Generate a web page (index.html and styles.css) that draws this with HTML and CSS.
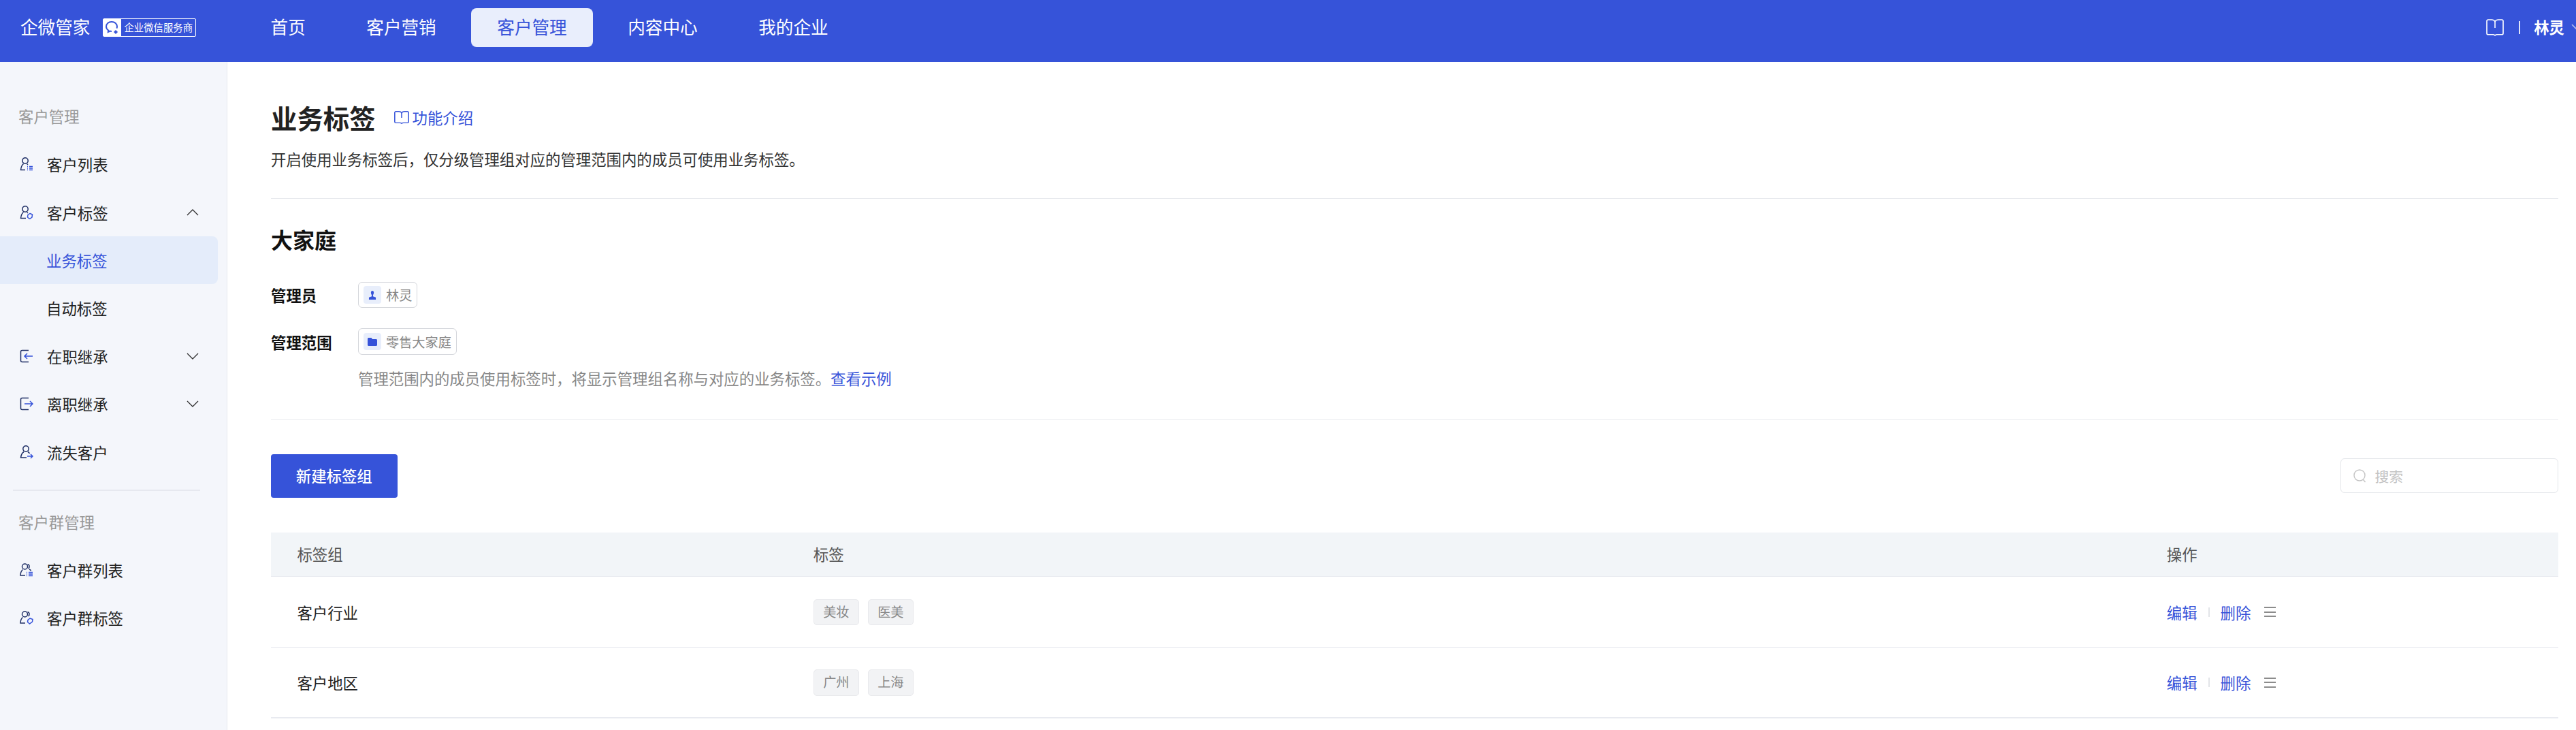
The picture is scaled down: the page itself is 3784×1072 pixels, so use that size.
FILE: index.html
```html
<!DOCTYPE html>
<html lang="zh-CN">
<head>
  <meta charset="UTF-8">
  <title>业务标签</title>
  <link rel="stylesheet" href="styles.css">
</head>
<body>
  <header class="topbar">
    <div class="brand">企微管家</div>
    <div class="badge">
      <span class="badge-logo">
        <svg width="22" height="22" viewBox="0 0 22 22" fill="none" stroke="#3653d9" stroke-width="2"><path d="M10 2c-4.700 0-8 3-8 7 0 2.400 1.300 4.300 3.200 5.500L4.800 17l3-1.400c.8.200 1.500.3 2.200.3"/><path d="M10 2c4.600 0 8 3 8 7 0 1-.2 1.800-.6 2.600"/><path d="M16 14.500l2.500 2.500-2.500 2.500-2.500-2.500z" fill="#3653d9" stroke-width="1"/></svg>
      </span>
      <span class="badge-text">企业微信服务商</span>
    </div>
    <nav class="nav">
      <a class="nav-item">首页</a>
      <a class="nav-item">客户营销</a>
      <a class="nav-item active">客户管理</a>
      <a class="nav-item">内容中心</a>
      <a class="nav-item">我的企业</a>
    </nav>
    <div class="user">
      <svg width="26" height="25" viewBox="0 0 26 25" fill="none" stroke="#fff" stroke-width="1.600"><path d="M13 3.500C12 1.800 10.500 1 8 1H3C1.800 1 1 1.800 1 3v18c0 1.200.8 1.800 2 1.800h7c1.300 0 2.200.4 3 1.200.8-.8 1.700-1.200 3-1.200h7c1.200 0 2-.6 2-1.800V3c0-1.200-.8-2-2-2h-5c-2.500 0-4 .8-5 2.500z"/><path d="M13 3.500V13"/></svg>
      <span class="user-line"></span>
      <span class="user-name">林灵</span>
      <svg width="16" height="10" viewBox="0 0 16 10" fill="none" stroke="#fff" stroke-opacity=".6" stroke-width="1.600"><path d="M1 1l7 7 7-7"/></svg>
    </div>
  </header>

  <div class="layout">
    <aside class="sidebar">
      <div class="side-label">客户管理</div>
      <a class="side-item">
        <svg class="side-icon" viewBox="0 0 20 20" fill="none" stroke="#1f2f66" stroke-width="1.500"><circle cx="8" cy="5" r="4.200"/><path d="M5.500 9.500C3.500 11 2 14 1.500 18.500H8"/><path d="M10.500 9.500c.6.400 1 .9 1.400 1.500"/><path d="M11 13.500h1M14 13.500h5M11 16h1M14 16h5M11 18.500h1M14 18.500h5" stroke="#3653d9"/></svg>
        <span>客户列表</span>
      </a>
      <a class="side-item">
        <svg class="side-icon" viewBox="0 0 20 20" fill="none" stroke="#1f2f66" stroke-width="1.500"><circle cx="8" cy="5" r="4.200"/><path d="M5.500 9.500C3.500 11 2 14 1.500 18.500H9"/><path d="M10.500 9.500c.6.400 1 .9 1.400 1.500"/><path d="M15 11.500l3.500 1.500-.5 4-3.500 2.500-3-2.500.5-3.500z" stroke="#3653d9"/></svg>
        <span>客户标签</span>
        <svg class="side-arrow" viewBox="0 0 18 10" fill="none" stroke="#333" stroke-width="1.300"><path d="M1 9l8-8 8 8"/></svg>
      </a>
      <a class="side-item sub current"><span>业务标签</span></a>
      <a class="side-item sub"><span>自动标签</span></a>
      <a class="side-item">
        <svg class="side-icon" viewBox="0 0 20 20" fill="none" stroke="#1f2f66" stroke-width="1.500"><path d="M13 1.500H3.500c-1 0-2 1-2 2v13c0 1 1 2 2 2H13"/><path d="M19 10H7M11 6l-4 4 4 4" stroke="#3653d9"/></svg>
        <span>在职继承</span>
        <svg class="side-arrow" viewBox="0 0 18 10" fill="none" stroke="#333" stroke-width="1.300"><path d="M1 1l8 8 8-8"/></svg>
      </a>
      <a class="side-item">
        <svg class="side-icon" viewBox="0 0 20 20" fill="none" stroke="#1f2f66" stroke-width="1.500"><path d="M13 1.500H3.500c-1 0-2 1-2 2v13c0 1 1 2 2 2H13"/><path d="M7 10h12M15 6l4 4-4 4" stroke="#3653d9"/></svg>
        <span>离职继承</span>
        <svg class="side-arrow" viewBox="0 0 18 10" fill="none" stroke="#333" stroke-width="1.300"><path d="M1 1l8 8 8-8"/></svg>
      </a>
      <a class="side-item">
        <svg class="side-icon" viewBox="0 0 20 20" fill="none" stroke="#1f2f66" stroke-width="1.500"><circle cx="9" cy="5" r="4.200"/><path d="M6 9.500C3.500 11 2 14 1.500 18H10"/><path d="M12 9.500c1 .6 2 1.500 2.500 2.500"/><path d="M11 16h8M16 13l3 3-3 3" stroke="#3653d9"/></svg>
        <span>流失客户</span>
      </a>
      <div class="side-line"></div>
      <div class="side-label second">客户群管理</div>
      <a class="side-item">
        <svg class="side-icon" viewBox="0 0 20 20" fill="none" stroke="#1f2f66" stroke-width="1.500"><circle cx="7.500" cy="5" r="4"/><path d="M4.500 9.500C2.500 11 1.200 14 1 18h7"/><path d="M11.500 1.800c3 .3 3.500 4.500 1 6M14 9c1 .3 2 1 2.600 2"/><path d="M10 13.500h1M13 13.500h6M10 16h1M13 16h6M10 18.500h1M13 18.500h6" stroke="#3653d9"/></svg>
        <span>客户群列表</span>
      </a>
      <a class="side-item">
        <svg class="side-icon" viewBox="0 0 20 20" fill="none" stroke="#1f2f66" stroke-width="1.500"><circle cx="7.500" cy="5" r="4"/><path d="M4.500 9.500C2.500 11 1.200 14 1 18h7"/><path d="M11.500 1.800c3 .3 3.500 4.500 1 6"/><path d="M15 11l4 1.500-.5 3.500-4 3-3-2.500.5-3z" stroke="#3653d9"/></svg>
        <span>客户群标签</span>
      </a>
    </aside>

    <main class="content">
      <div class="title-row">
        <h1>业务标签</h1>
        <a class="intro">
          <svg width="22" height="19" viewBox="0 0 26 25" preserveAspectRatio="none" fill="none" stroke="#3653d9" stroke-width="1.800"><path d="M13 3.500C12 1.800 10.500 1 8 1H3C1.800 1 1 1.800 1 3v18c0 1.200.8 1.800 2 1.800h7c1.300 0 2.200.4 3 1.200.8-.8 1.700-1.200 3-1.200h7c1.200 0 2-.6 2-1.800V3c0-1.200-.8-2-2-2h-5c-2.500 0-4 .8-5 2.500z"/><path d="M13 3.500V13"/></svg>
          功能介绍
        </a>
      </div>
      <p class="desc">开启使用业务标签后，仅分级管理组对应的管理范围内的成员可使用业务标签。</p>
      <div class="divider first"></div>

      <h2>大家庭</h2>
      <div class="info-row admin">
        <label>管理员</label>
        <span class="chip">
          <span class="chip-icon">
            <svg width="12" height="13" viewBox="0 0 14 16" fill="#3653d9"><path d="M7 0c1.600 0 2.600 1.200 2.600 3 0 1.800-.6 3.400-1.400 4.400V10l5 2v4H.8v-4l5-2V7.400C5 6.400 4.400 4.800 4.400 3 4.400 1.200 5.400 0 7 0z"/></svg>
          </span>
          林灵
        </span>
      </div>
      <div class="info-row scope">
        <label>管理范围</label>
        <span class="chip">
          <span class="chip-icon">
            <svg width="14" height="12" viewBox="0 0 14 12" fill="#3653d9"><path d="M1.500 0H5.500L7 2h5.500c.8 0 1.500.7 1.500 1.500v7c0 .8-.7 1.500-1.500 1.500h-11C.7 12 0 11.300 0 10.500v-9C0 .7.700 0 1.500 0z"/></svg>
          </span>
          零售大家庭
        </span>
      </div>
      <p class="hint">管理范围内的成员使用标签时，将显示管理组名称与对应的业务标签。<a>查看示例</a></p>
      <div class="divider second"></div>

      <div class="toolbar">
        <button class="btn-primary">新建标签组</button>
        <div class="search">
          <svg width="19" height="20" viewBox="0 0 19 20" fill="none" stroke="#c4c4c4" stroke-width="1.400"><circle cx="9" cy="9" r="8"/><path d="M14.500 15.500l3 3.500"/></svg>
          <span>搜索</span>
        </div>
      </div>

      <div class="table">
        <div class="tr head">
          <div class="td">标签组</div>
          <div class="td">标签</div>
          <div class="td">操作</div>
        </div>
        <div class="tr">
          <div class="td">客户行业</div>
          <div class="td tags"><span class="tag">美妆</span><span class="tag">医美</span></div>
          <div class="td ops"><a>编辑</a><i class="op-sep"></i><a>删除</a><i class="op-drag"></i></div>
        </div>
        <div class="tr last">
          <div class="td">客户地区</div>
          <div class="td tags"><span class="tag">广州</span><span class="tag">上海</span></div>
          <div class="td ops"><a>编辑</a><i class="op-sep"></i><a>删除</a><i class="op-drag"></i></div>
        </div>
      </div>
    </main>
  </div>
</body>
</html>
```

FILE: styles.css
```css
* {
  box-sizing: border-box;
}
html, body {
  height: 100%;
}
body {
  margin: 0;
  overflow: hidden;
  background: #fff;
  color: #222;
  font-family: "Noto Sans CJK SC", "Noto Sans", sans-serif;
  font-size: 22.4px;
}
a {
  color: inherit;
}

/* top bar */
.topbar {
  display: flex;
  align-items: flex-start;
  height: 91px;
  padding: 12px 0 0 30px;
  background: #3653d9;
  color: #fff;
}
.brand {
  font-size: 25.6px;
  line-height: 54px;
}
.badge {
  display: flex;
  align-items: stretch;
  height: 27px;
  margin: 15px 0 0 19px;
  border: 1.500px solid #fff;
  border-radius: 2px;
}
.badge-logo {
  display: flex;
  align-items: center;
  justify-content: center;
  width: 26px;
  background: #fff;
}
.badge-text {
  padding: 0 4px;
  font-size: 14.400px;
  line-height: 24px;
  white-space: nowrap;
}
.nav {
  display: flex;
  gap: 12.800px;
  margin-left: 71px;
}
.nav-item {
  height: 57px;
  padding: 0 38.400px;
  border-radius: 8px;
  font-size: 25.600px;
  line-height: 54px;
}
.nav-item.active {
  background: #e9eefc;
  color: #3653d9;
}
.user {
  display: flex;
  align-items: center;
  height: 56px;
  margin-left: auto;
  margin-right: -9px;
}
.user-line {
  width: 2px;
  height: 19px;
  margin: 0 20px 0 22px;
  background: #dfe4f8;
}
.user-name {
  margin-top: -3px;
  font-weight: 700;
}
.user svg:last-child {
  margin-left: 10px;
}

/* sidebar */
.layout {
  display: flex;
  height: calc(100vh - 91px);
}
.sidebar {
  flex: none;
  width: 334px;
  padding-top: 63px;
  background: #f4f6fb;
  border-right: 1px solid #e6e8ef;
}
.side-label {
  height: 32px;
  padding-left: 27px;
  color: #999;
  line-height: 32px;
}
.side-label.second {
  margin-top: 29px;
}
.side-item {
  display: flex;
  align-items: center;
  width: 320px;
  height: 70.400px;
  padding-left: 29px;
  border-radius: 0 8px 8px 0;
}
.side-label + .side-item {
  margin-top: 20px;
}
.side-icon {
  flex: none;
  width: 20px;
  height: 20px;
  margin-right: 20px;
}
.side-arrow {
  width: 18px;
  height: 10px;
  margin-left: auto;
  margin-right: 28px;
}
.side-item.sub {
  padding-left: 68px;
}
.side-item.current {
  background: #e4ecfa;
  color: #3653d9;
}
.side-line {
  width: 275px;
  height: 2px;
  margin: 20px 0 0 19px;
  background: #e6e8ef;
}

/* content */
.content {
  flex: 1;
  min-width: 0;
  padding: 57px 25.600px 0 64px;
}
.title-row {
  display: flex;
  align-items: center;
  height: 48px;
}
h1 {
  margin: 0;
  font-size: 38.400px;
  font-weight: 700;
  line-height: 48px;
}
.intro {
  display: flex;
  align-items: center;
  gap: 5px;
  margin-left: 27px;
  color: #3653d9;
}
.desc {
  margin: 21px 0 0;
  color: #333;
  line-height: 32px;
}
.divider {
  height: 1px;
  background: #e8eaee;
}
.divider.first {
  margin-top: 42px;
}
.divider.second {
  margin-top: 45px;
}
h2 {
  margin: 37px 0 0;
  color: #111;
  font-size: 32px;
  font-weight: 700;
  line-height: 44px;
}
.info-row {
  display: flex;
  align-items: center;
}
.info-row.admin {
  margin-top: 41px;
}
.info-row.scope {
  margin-top: 30px;
}
.info-row label {
  width: 128px;
  color: #111;
  font-weight: 700;
}
.chip {
  display: flex;
  align-items: center;
  gap: 7px;
  height: 38.400px;
  padding: 0 7px;
  border: 1px solid #d4d6db;
  border-radius: 6px;
  color: #888;
  font-size: 19.200px;
}
.chip-icon {
  display: flex;
  align-items: center;
  justify-content: center;
  width: 26px;
  height: 25.600px;
  background: #e8eefb;
  border-radius: 4px;
}
.hint {
  margin: 18px 0 0 128px;
  color: #888;
  line-height: 32px;
}
.hint a {
  color: #3653d9;
}

.toolbar {
  display: flex;
  align-items: center;
  justify-content: space-between;
  margin-top: 50px;
}
.btn-primary {
  width: 185.600px;
  height: 64px;
  padding: 0 0 2px;
  border: 0;
  border-radius: 4px;
  background: #3653d9;
  color: #fff;
  font: inherit;
  font-weight: 500;
}
.search {
  display: flex;
  align-items: center;
  gap: 12px;
  width: 320px;
  height: 51.200px;
  padding-left: 18px;
  border: 1px solid #e4e6ea;
  border-radius: 6px;
  color: #c4c4c4;
  font-size: 20.800px;
}

/* table */
.table {
  margin-top: 51px;
}
.tr {
  display: grid;
  grid-template-columns: 758.400px 1988px 1fr;
  align-items: center;
  height: 104px;
  border-bottom: 1px solid #e8eaf0;
}
.tr.head {
  height: 65.600px;
  padding-bottom: 3px;
  background: #f2f5f8;
  color: #555;
}
.tr.last {
  border-bottom-width: 2px;
}
.td {
  padding-left: 38.400px;
}
.tags {
  display: flex;
  gap: 12.800px;
}
.tag {
  width: 67.200px;
  height: 38.400px;
  border: 1px solid #e8e9ec;
  border-radius: 5px;
  background: #f2f3f5;
  color: #888;
  font-size: 19.200px;
  line-height: 35px;
  text-align: center;
}
.ops {
  display: flex;
  align-items: center;
  color: #3653d9;
}
.op-sep {
  width: 2px;
  height: 14px;
  margin: 0 16px;
  background: #e2e4e8;
}
.op-drag {
  width: 17px;
  height: 15px;
  margin-left: 20px;
  border-top: 2px solid #8c8c8c;
  border-bottom: 2px solid #8c8c8c;
  background: linear-gradient(#8c8c8c, #8c8c8c) center / 100% 2px no-repeat;
}
```
